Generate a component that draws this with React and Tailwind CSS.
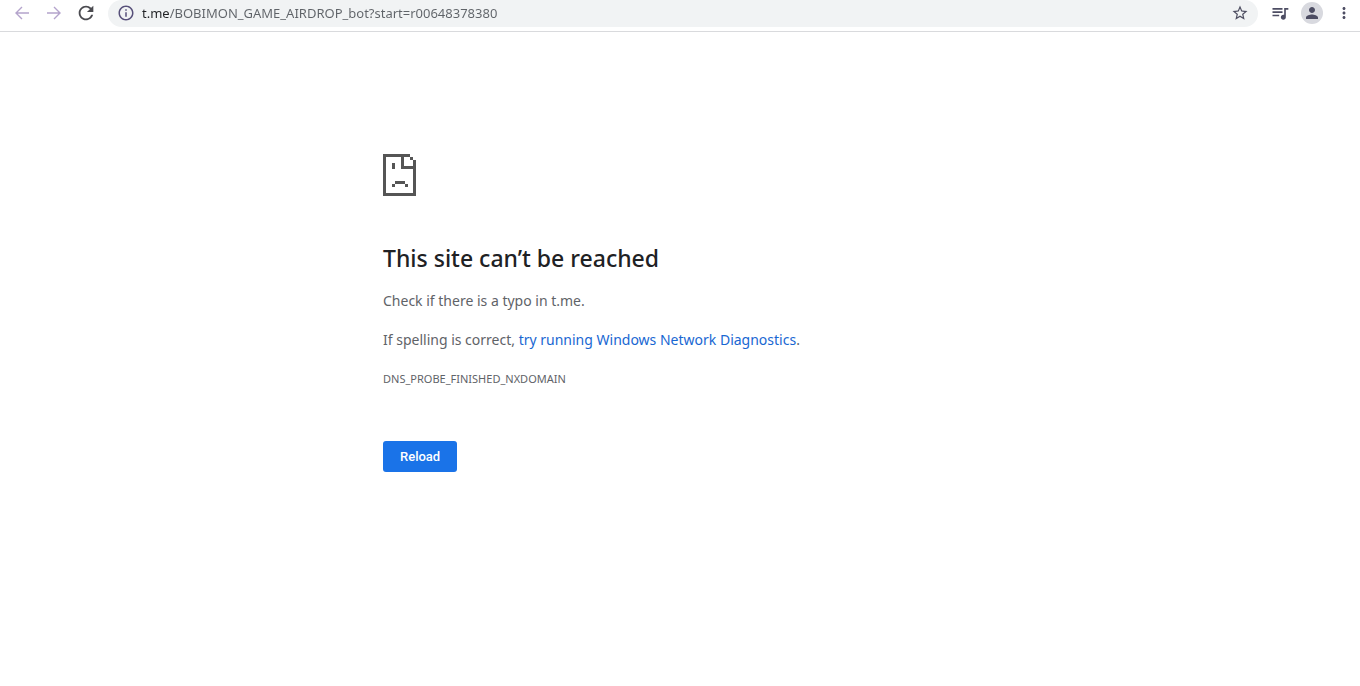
import { MdInfoOutline, MdRefresh, MdStarBorder, MdQueueMusic, MdPerson, MdMoreVert } from "react-icons/md";

function Arrow({ className }) {
  return (
    <svg viewBox="0 0 14 14" className={className} fill="none" stroke="currentColor" strokeWidth="1.4" aria-hidden="true">
      <path d="M14 7H1.2M7 1L1 7l6 6" />
    </svg>
  );
}

function SadPage() {
  return (
    <svg viewBox="0 0 33 42" className="h-[42px] w-[33px]" fill="#555555" shapeRendering="crispEdges" aria-hidden="true">
      <path d="M0 0h27v3h-6v9h12v30H0zM3 3v36h27V15H18V3z" fillRule="evenodd" />
      <path d="M27 3h3v3h-3zM30 6h3v6h-3zM9 9h3v6H9zM12 27h10v3H12zM9 30h3v3H9zM22 30h3v3h-3z" />
    </svg>
  );
}

function Toolbar() {
  return (
    <header className="flex h-8 items-start border-b border-[#d9dadd] pr-[7px]">
      <nav className="flex h-[26px] w-[108px] shrink-0 items-center gap-4 pl-[14px]">
        <button aria-label="Back" className="flex size-4 items-center justify-center text-[#b4a4cc]">
          <Arrow className="size-[14px]" />
        </button>
        <button aria-label="Forward" className="flex size-4 items-center justify-center text-[#b4a4cc]">
          <Arrow className="size-[14px] rotate-180" />
        </button>
        <button aria-label="Reload this page" className="flex size-4 items-center justify-center text-[#4b4b50]">
          <MdRefresh className="size-[22px] shrink-0" />
        </button>
      </nav>
      <div className="flex h-[27px] min-w-0 flex-1 items-center rounded-full bg-[#f1f3f4] px-[9px] pb-px">
        <button aria-label="View site information" className="text-[#57507a]">
          <MdInfoOutline className="size-[18px]" />
        </button>
        <input
          aria-label="Address"
          defaultValue="t.me/BOBIMON_GAME_AIRDROP_bot?start=r00648378380"
          className="ml-[7px] h-5 min-w-0 flex-1 bg-[linear-gradient(to_right,#202124_27px,#5f6368_27px)] bg-clip-text font-['Noto_Sans',sans-serif] text-[13px] text-transparent outline-none"
        />
        <button aria-label="Bookmark this page" className="text-[#4d4d60]">
          <MdStarBorder className="size-[18px]" />
        </button>
      </div>
      <div className="flex h-[26px] shrink-0 items-center pl-3 text-[#4d4d63]">
        <button aria-label="Media controls">
          <MdQueueMusic className="size-5" />
        </button>
        <button aria-label="Profile" className="ml-[11px] flex size-[22px] items-center justify-center rounded-full bg-[#d8d9df]">
          <MdPerson className="size-[18px]" />
        </button>
        <button aria-label="More options" className="ml-3">
          <MdMoreVert className="size-[18px]" />
        </button>
      </div>
    </header>
  );
}

export default function App() {
  return (
    <div className="min-h-screen bg-white font-['Noto_Sans',sans-serif] text-[#5f6368]">
      <Toolbar />
      <main className="mx-auto max-w-[594px] pt-[122px]">
        <SadPage />
        <h1 className="mt-[46px] text-[23px] leading-8 font-medium text-[#202124]">This site can’t be reached</h1>
        <p className="mt-[17px] text-[14px] leading-5">Check if there is a typo in t.me.</p>
        <p className="mt-[19px] text-[14px] leading-5">
          If spelling is correct,{" "}
          <a href="#diagnostics" className="text-[#1967d2]">try running Windows Network Diagnostics</a>.
        </p>
        <p className="mt-[19px] text-[11px] leading-5">DNS_PROBE_FINISHED_NXDOMAIN</p>
        <button className="mt-[52px] h-[31px] rounded-[3px] bg-[#1a73e8] px-[17px] font-['Roboto',sans-serif] text-[13px] font-medium text-white">
          Reload
        </button>
      </main>
    </div>
  );
}
